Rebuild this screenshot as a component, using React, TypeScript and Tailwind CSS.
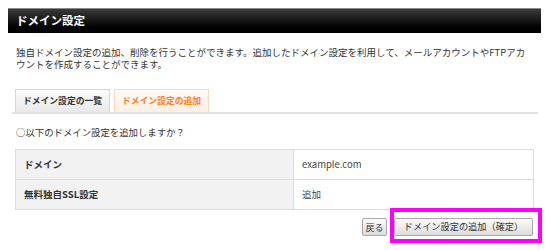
import React from "react";

export default function App() {
  return (
    <div
      className="w-[550px] h-[250px] bg-white overflow-hidden pt-[8px] text-[#333]"
      style={{ fontFamily: '"Noto Sans CJK JP", "Noto Sans", sans-serif' }}
    >
      {/* Header */}
      <div className="ml-[8px] w-[533px] h-[25px] border-t border-[#8a8a8a] bg-gradient-to-b from-[#3a3a3a] via-[#161616] to-[#000] flex items-center pl-[8px]">
        <span className="text-white font-bold text-[11.5px] leading-none">ドメイン設定</span>
      </div>

      {/* Description */}
      <p className="mt-[13px] ml-[16px] text-[9.5px] leading-[12px] tracking-[0px]">
        独自ドメイン設定の追加、削除を行うことができます。追加したドメイン設定を利用して、メールアカウントやFTPアカ
        <br />
        ウントを作成することができます。
      </p>

      {/* Tabs */}
      <div className="mt-[19px] ml-[12px] w-[526px] flex gap-[4px] pl-[3px] border-b-2 border-[#e2e2e2]">
        <div className="w-[95px] h-[23px] flex items-center justify-center border border-b-0 border-[#d6d6d6] bg-gradient-to-b from-[#fbfbfb] to-[#e9e9e9] text-[8.8px] font-bold text-[#333]">
          ドメイン設定の一覧
        </div>
        <div className="w-[95px] h-[23px] flex items-center justify-center border border-b-0 border-[#f3dcc6] bg-gradient-to-b from-[#fffaf5] to-[#fff0e2] text-[8.8px] font-bold text-[#ff7d22]">
          ドメイン設定の追加
        </div>
      </div>

      {/* Question */}
      <p className="mt-[12px] ml-[16px] text-[9.4px] leading-[12px]">○以下のドメイン設定を追加しますか？</p>

      {/* Table */}
      <div className="mt-[11px] ml-[15px] w-[519px] border border-[#dcdcdc] text-[9.5px]">
        <div className="flex h-[30px] border-b border-[#dcdcdc]">
          <div className="w-[278px] bg-[#f2f2f2] border-r border-[#dcdcdc] flex items-center pl-[8px] font-bold">
            ドメイン
          </div>
          <div className="flex-1 flex items-center pl-[8px] text-[#444]">example.com</div>
        </div>
        <div className="flex h-[29px]">
          <div className="w-[278px] bg-[#f2f2f2] border-r border-[#dcdcdc] flex items-center pl-[8px] font-bold">
            無料独自SSL設定
          </div>
          <div className="flex-1 flex items-center pl-[8px] text-[#444]">追加</div>
        </div>
      </div>

      {/* Buttons */}
      <div className="mt-[-2px] w-[542px] flex justify-end items-start gap-[3px]">
        <button className="mt-[10px] w-[25px] h-[18px] flex items-center justify-center border border-[#a9a9a9] rounded-[2px] bg-gradient-to-b from-[#fcfcfc] to-[#dcdcdc] text-[9px] text-[#333] leading-none">
          戻る
        </button>
        <div className="border-4 border-[#ff00ff] pt-[6px] pb-[3px] pr-[5px]">
          <button className="w-[139px] h-[18px] flex items-center justify-center border border-[#a9a9a9] rounded-[2px] bg-gradient-to-b from-[#fcfcfc] to-[#dcdcdc] text-[9.2px] text-[#333] leading-none">
            ドメイン設定の追加（確定）
          </button>
        </div>
      </div>
    </div>
  );
}
